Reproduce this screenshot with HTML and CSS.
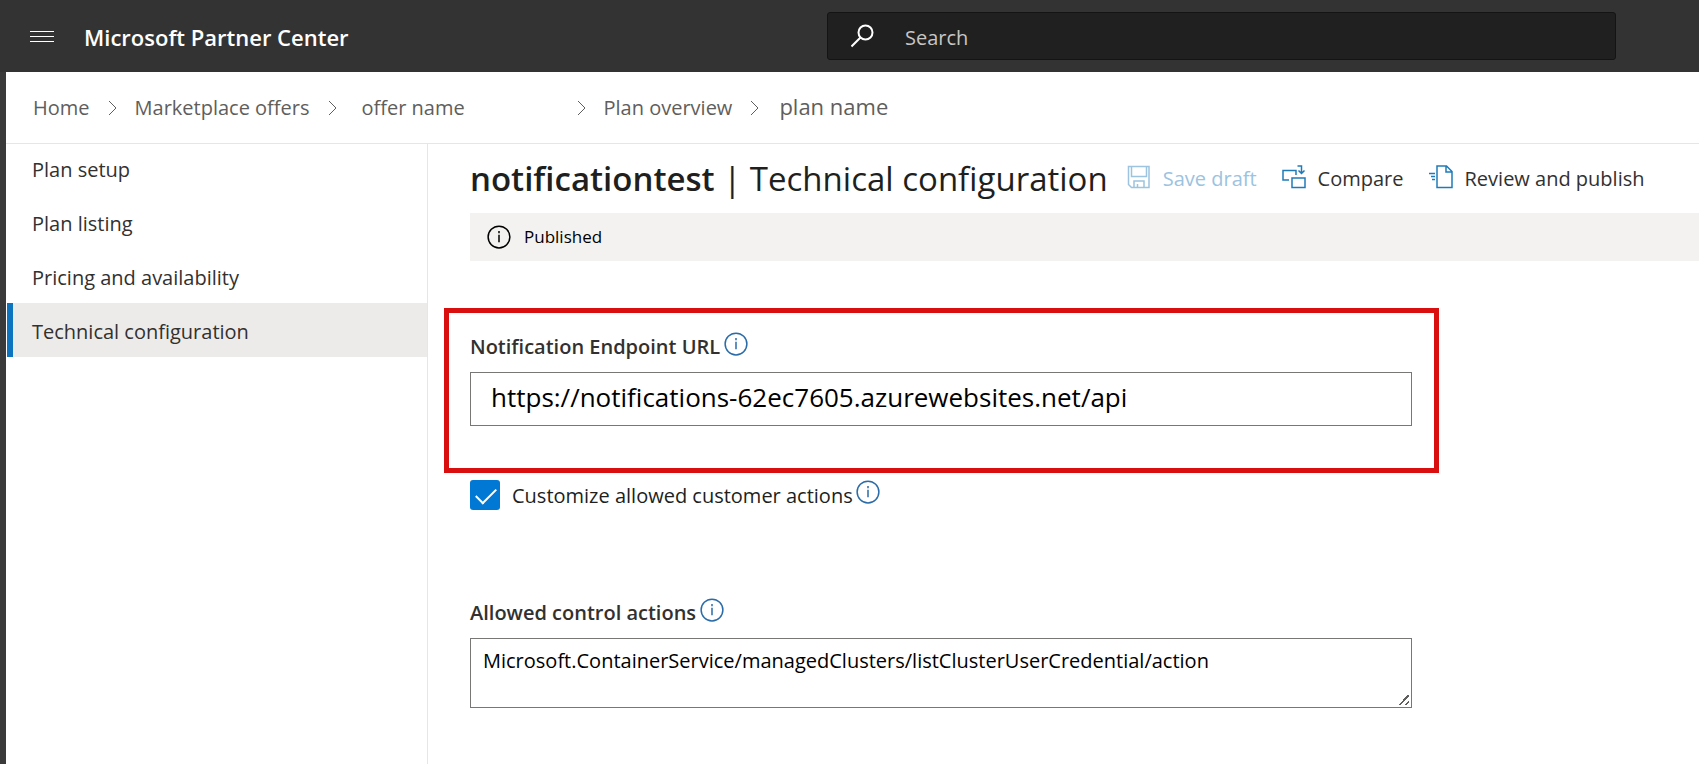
FILE: index.html
```html
<!DOCTYPE html>
<html lang="en">
<head>
<meta charset="utf-8">
<title>Microsoft Partner Center</title>
<link rel="stylesheet" href="styles.css">
</head>
<body>
<svg class="defs" aria-hidden="true">
  <symbol id="chevron" viewBox="0 0 9 16"><path d="M1 1l7 7-7 7"/></symbol>
  <symbol id="info" viewBox="0 0 32 32"><circle cx="16" cy="16" r="14.500"/><path d="M16 13v10M16 8v3"/></symbol>
</svg>
<header class="topbar">
  <button class="menu-button" type="button" aria-label="Menu">
    <svg width="24" height="12" viewBox="0 0 24 12"><path d="M0 .5h24M0 5.500h24M0 10.500h24"/></svg>
  </button>
  <span class="brand">Microsoft Partner Center</span>
  <label class="search">
    <svg width="24" height="24" viewBox="0 0 24 24"><circle cx="14.500" cy="8.500" r="7"/><path d="M9.500 13.500L.5 22.500"/></svg>
    <input class="search-input" type="search" placeholder="Search" aria-label="Search">
  </label>
</header>
<div class="page">
  <nav class="breadcrumb" aria-label="Breadcrumb">
    <a href="#">Home</a>
    <svg class="chevron"><use href="#chevron"/></svg>
    <a href="#">Marketplace offers</a>
    <svg class="chevron"><use href="#chevron"/></svg>
    <a class="crumb-offer" href="#">offer name</a>
    <svg class="chevron"><use href="#chevron"/></svg>
    <a href="#">Plan overview</a>
    <svg class="chevron"><use href="#chevron"/></svg>
    <a class="crumb-plan" href="#">plan name</a>
  </nav>
  <div class="columns">
    <nav class="sidebar" aria-label="Plan">
      <a class="side-link" href="#">Plan setup</a>
      <a class="side-link" href="#">Plan listing</a>
      <a class="side-link" href="#">Pricing and availability</a>
      <a class="side-link active" href="#" aria-current="page">Technical configuration</a>
    </nav>
    <main class="content">
      <div class="title-row">
        <h1 class="title"><strong>notificationtest</strong> | Technical configuration</h1>
        <div class="commands">
          <button class="command" type="button" disabled>
            <svg width="24" height="24" viewBox="0 0 48 48"><path d="M3 3h41v42H9l-6-6zM9 3v20h30V3M14 45V32h20v13M21 45v-7"/></svg>
            Save draft
          </button>
          <button class="command" type="button">
            <svg width="24" height="24" viewBox="0 0 48 48"><path d="M14 30H2V11h26v9M20 26h26v19H20zM31 2h8v14M33 11l6 6 6-6"/></svg>
            Compare
          </button>
          <button class="command" type="button">
            <svg width="24" height="24" viewBox="0 0 48 48"><path d="M16 2h19l11 11v32H16zM34 2v12h12M0 17h12M4 23h8M6 29h6"/></svg>
            Review and publish
          </button>
        </div>
      </div>
      <div class="notice" role="status">
        <svg class="info"><use href="#info"/></svg>
        <span>Published</span>
      </div>
      <form class="form">
        <div class="highlight">
          <div class="label-row">
            <label class="label" for="endpoint">Notification Endpoint URL</label>
            <svg class="info"><use href="#info"/></svg>
          </div>
          <input class="field endpoint" id="endpoint" type="text" value="https://notifications-62ec7605.azurewebsites.net/api">
        </div>
        <div class="check-row">
          <input class="checkbox" id="customize" type="checkbox" checked>
          <label for="customize">Customize allowed customer actions</label>
          <svg class="info"><use href="#info"/></svg>
        </div>
        <div class="label-row">
          <label class="label" for="actions">Allowed control actions</label>
          <svg class="info"><use href="#info"/></svg>
        </div>
        <textarea class="field actions" id="actions" spellcheck="false">Microsoft.ContainerService/managedClusters/listClusterUserCredential/action</textarea>
      </form>
    </main>
  </div>
</div>
</body>
</html>
```
FILE: styles.css
```css
* { box-sizing: border-box; }

body {
  margin: 0;
  min-height: 100vh;
  display: flex;
  flex-direction: column;
  background: #fff;
  color: #323130;
  font: 20px/28px "Open Sans", "Noto Sans", sans-serif;
}

a { color: inherit; text-decoration: none; }
button, input, textarea { font: inherit; }
svg { flex: none; fill: none; stroke: currentColor; }
.defs { position: absolute; width: 0; height: 0; }

.topbar {
  display: flex;
  align-items: center;
  height: 72px;
  padding: 0 83px 0 30px;
  background: #333;
  color: #fff;
}
.menu-button {
  display: flex;
  padding: 2px 0 0;
  border: 0;
  background: none;
  color: inherit;
}
.brand {
  margin-left: 30px;
  padding-top: 2px;
  font-size: 22px;
  font-weight: 600;
}
.search {
  display: flex;
  align-items: center;
  gap: 30px;
  width: 789px;
  height: 48px;
  margin-left: auto;
  padding: 0 23px;
  border: 1px solid #141414;
  border-radius: 3px;
  background: #202020;
}
.search svg { stroke-width: 2; }
.search-input {
  flex: 1;
  min-width: 0;
  padding: 3px 0 0;
  border: 0;
  outline: 0;
  background: none;
  color: #fff;
}
.search-input::placeholder { color: #c8c6c4; opacity: 1; }

.page {
  flex: 1;
  display: flex;
  flex-direction: column;
  border-left: 6px solid #3a3a3a;
}
.breadcrumb {
  display: flex;
  align-items: center;
  gap: 18px;
  height: 72px;
  padding: 0 27px;
  border-bottom: 1px solid #e6e6e6;
  color: #605e5c;
}
.chevron { width: 9px; height: 16px; }
.crumb-offer { min-width: 204px; padding-left: 7px; }
.crumb-plan { padding: 0 0 3px 2px; font-size: 22px; }

.columns { flex: 1; display: flex; }
.sidebar {
  width: 422px;
  padding-left: 1px;
  border-right: 1px solid #e6e6e6;
}
.side-link {
  display: block;
  padding: 15px 19px 11px;
  border-left: 6px solid transparent;
}
.side-link:first-child { padding-top: 12px; }
.side-link.active { border-color: #0f74bf; background: #edebe9; }

.content { flex: 1; min-width: 0; padding-left: 42px; }
.title-row {
  display: flex;
  align-items: center;
  gap: 19px;
  height: 69px;
}
.title {
  margin: 0;
  color: #201f1e;
  font-size: 33px;
  font-weight: 400;
  line-height: 48px;
  white-space: nowrap;
}
.title strong { font-weight: 600; }
.commands { display: flex; gap: 25px; }
.command {
  display: flex;
  align-items: center;
  gap: 12px;
  padding: 0;
  border: 0;
  background: none;
  color: #323130;
  white-space: nowrap;
}
.command svg { margin-bottom: 4px; color: #1f7bb8; stroke-width: 3; }
.command:disabled, .command:disabled svg { color: #9cc3df; }

.notice {
  display: flex;
  align-items: center;
  gap: 13px;
  height: 48px;
  padding: 0 17px;
  background: #f3f2f1;
  color: #000;
  font-size: 17px;
}
.info { width: 24px; height: 24px; stroke-width: 2; color: #2b6ca8; }
.notice .info { color: #000; }

.form { max-width: 942px; padding-top: 47px; }
.highlight {
  margin: 0 -27px 7px -26px;
  padding: 19px 22px 42px 21px;
  border: 5px solid #d90f0f;
}
.label-row { display: flex; gap: 4px; height: 40px; }
.label { padding-top: 1px; font-weight: 600; }
.field {
  display: block;
  width: 100%;
  border: 1px solid #797775;
  border-radius: 0;
  outline: 0;
  background: #fff;
  color: #000;
}
.endpoint { height: 54px; padding: 0 20px 4px; font-size: 26px; }
.actions { height: 70px; padding: 8px 12px; }
.actions::-webkit-resizer {
  background: linear-gradient(135deg, transparent 50%, #605e5c 50% 60%, transparent 60% 78%, #605e5c 78% 88%, transparent 88%) 2px 2px / 11px 11px no-repeat;
}
.check-row { display: flex; height: 118px; color: #201f1e; }
.check-row label { margin: 2px 3px 0 12px; }
.checkbox {
  appearance: none;
  width: 30px;
  height: 30px;
  margin: 0;
  border-radius: 3px;
  background: #0078d4;
}
.checkbox:checked::before {
  content: "";
  display: block;
  width: 18px;
  height: 9px;
  margin: 8px 6px;
  border: solid #fff;
  border-width: 0 0 2px 2px;
  transform: rotate(-45deg);
}
```
